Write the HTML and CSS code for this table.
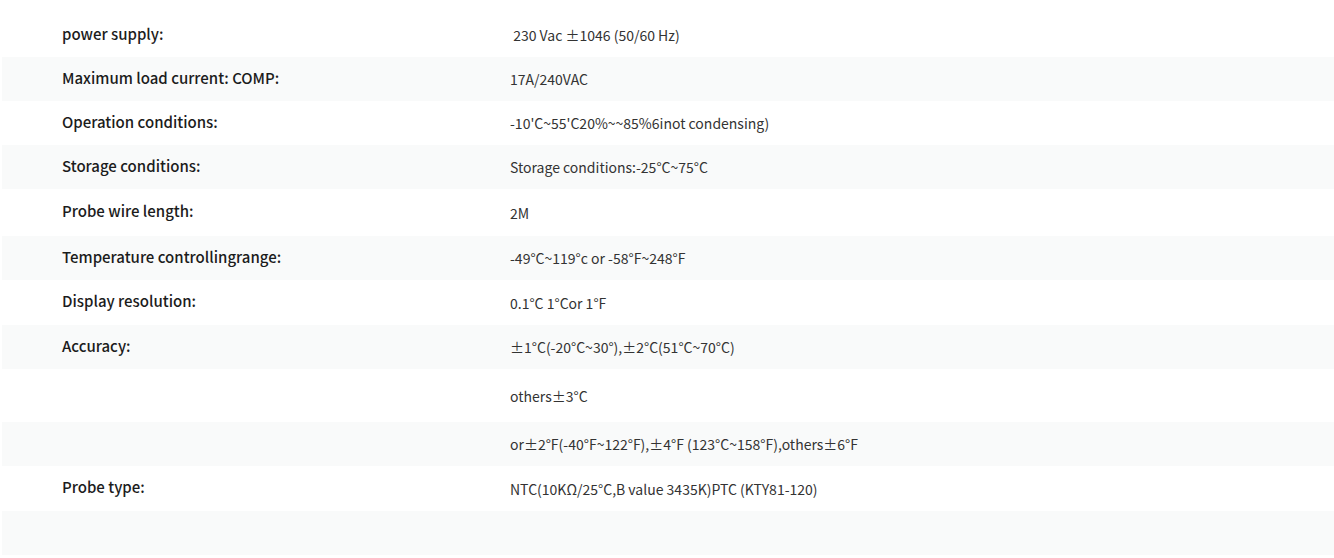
FILE: index.html
```html
<!DOCTYPE html>
<html lang="en">
<head>
<meta charset="utf-8">
<title>Specifications</title>
<link rel="stylesheet" href="styles.css">
</head>
<body>
<div class="spec">
  <div class="row"><div class="label">power supply:</div><div class="value">&nbsp;230 Vac ±1046 (50/60 Hz)</div></div>
  <div class="row alt"><div class="label">Maximum load current: COMP:</div><div class="value">17A/240VAC</div></div>
  <div class="row"><div class="label">Operation conditions:</div><div class="value">-10'C~55'C20%~~85%6inot condensing)</div></div>
  <div class="row alt"><div class="label">Storage conditions:</div><div class="value">Storage conditions:-25°C~75°C</div></div>
  <div class="row row-47"><div class="label">Probe wire length:</div><div class="value">2M</div></div>
  <div class="row alt"><div class="label">Temperature controllingrange:</div><div class="value">-49°C~119°c or -58°F~248°F</div></div>
  <div class="row row-45"><div class="label">Display resolution:</div><div class="value">0.1°C 1°Cor 1°F</div></div>
  <div class="row alt"><div class="label">Accuracy:</div><div class="value">±1°C(-20°C~30°),±2°C(51°C~70°C)</div></div>
  <div class="row row-53"><div class="label"></div><div class="value">others±3°C</div></div>
  <div class="row alt"><div class="label"></div><div class="value">or±2°F(-40°F~122°F),±4°F (123°C~158°F),others±6°F</div></div>
  <div class="row row-45"><div class="label">Probe type:</div><div class="value">NTC(10KΩ/25°C,B value 3435K)PTC (KTY81-120)</div></div>
  <div class="row alt"><div class="label"></div><div class="value"></div></div>
</div>
</body>
</html>
```

FILE: styles.css
```css
html, body {
  margin: 0;
  padding: 0;
  background: #ffffff;
}

body {
  font-family: "Noto Sans CJK SC", "Noto Sans", sans-serif;
  font-size: 14px;
  color: #333333;
}

.spec {
  padding: 13px 0 0 2px;
}

.row {
  display: grid;
  grid-template-columns: 448px 1fr;
  height: 44px;
  align-items: center;
}

.row-45 { height: 45px; }
.row-47 { height: 47px; }
.row-53 { height: 53px; }

.row.alt {
  background: #f9fafa;
}

.label {
  padding: 0 0 4px 60px;
  font-size: 15px;
  font-weight: 500;
  color: #1c1c1c;
}

.value {
  padding-left: 60px;
}
```
